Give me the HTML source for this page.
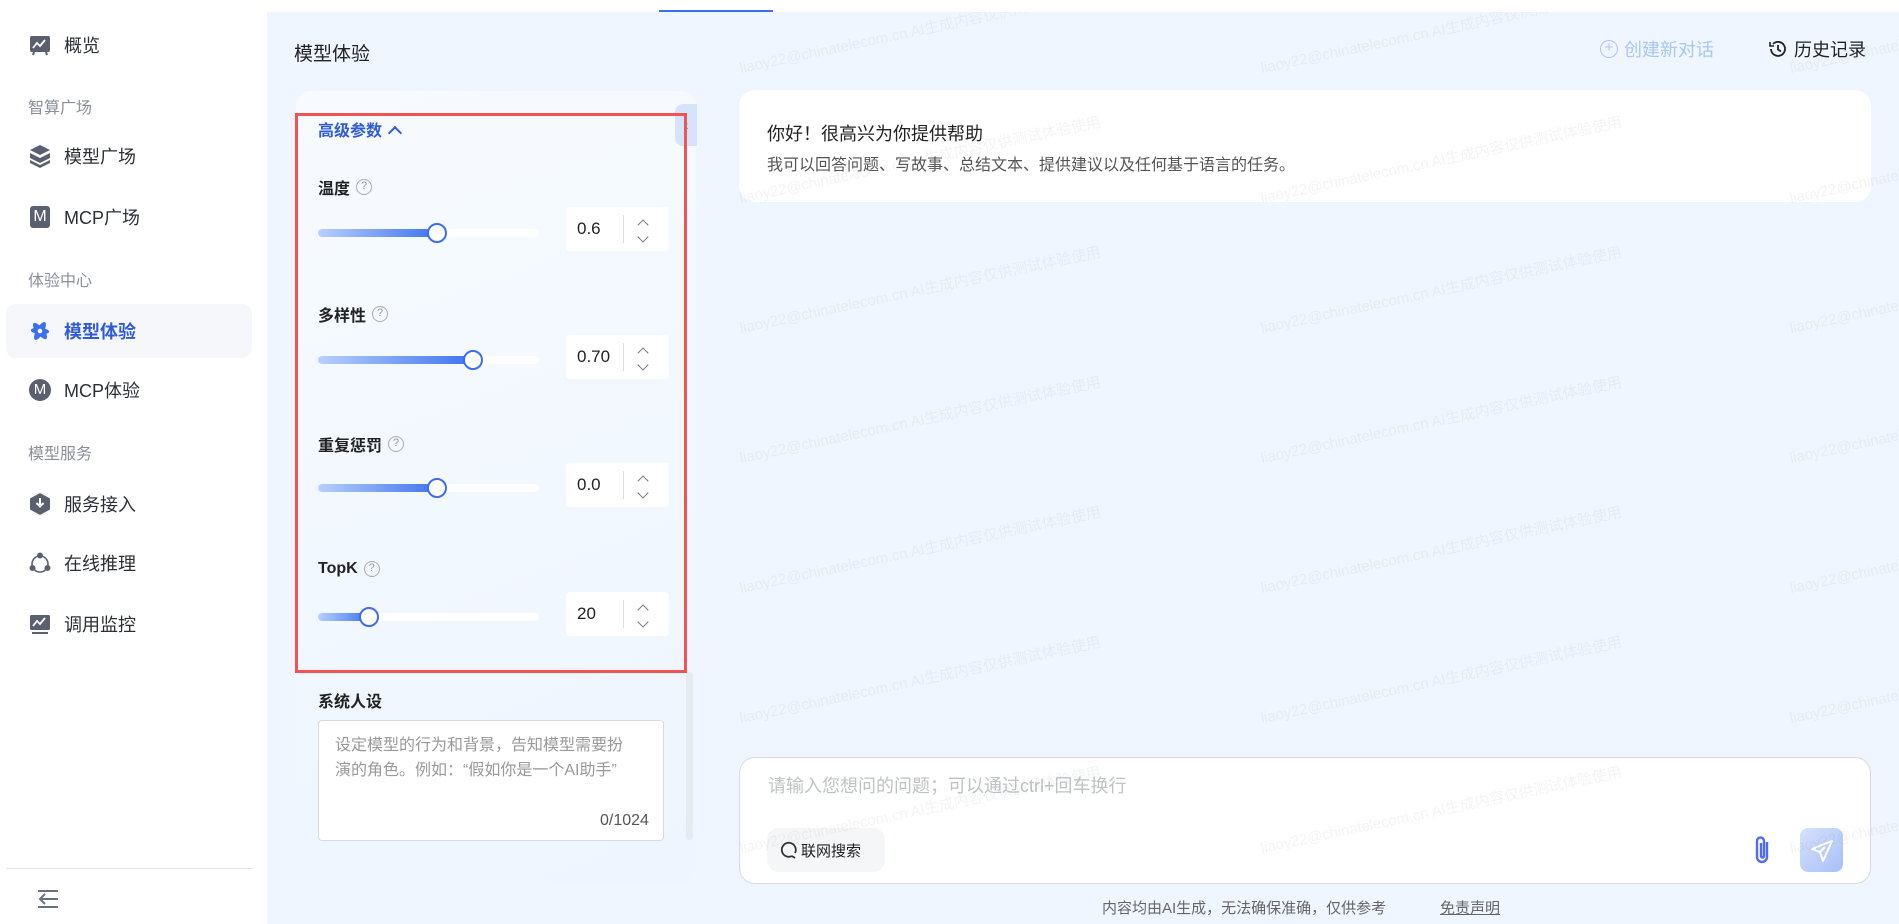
<!DOCTYPE html>
<html><head><meta charset="utf-8">
<style>
*{box-sizing:border-box;margin:0;padding:0}
body{width:1899px;height:924px;overflow:hidden;background:#eff6ff;font-family:"Liberation Sans","Noto Sans CJK SC",sans-serif;position:relative;color:#222}
.abs{position:absolute}
.side{left:0;top:0;width:267px;height:924px;background:#fff}
.item{position:absolute;left:0;width:267px;height:40px;display:flex;align-items:center;font-size:18px;color:#2b2f36}
.item .ic{width:22px;height:22px;margin-left:29px;margin-right:13px;display:flex;align-items:center;justify-content:center}
.sec{position:absolute;left:28px;font-size:16px;color:#8a8f99}
.topline{left:267px;top:0;width:1632px;height:12px;background:#fff}
.lbl{position:absolute;left:318px;font-size:16px;font-weight:bold;color:#222;display:flex;align-items:center}
.q{display:inline-block;width:16px;height:16px;border:1.5px solid #aaa;border-radius:50%;font-size:11px;color:#999;text-align:center;line-height:13px;margin-left:6px;font-weight:normal}
.track{position:absolute;left:318px;width:221px;height:8px;border-radius:4px;background:#fff}
.fill{position:absolute;left:0;top:0;height:8px;border-radius:4px;background:linear-gradient(90deg,#b8d0fb,#3f73ee)}
.thumb{position:absolute;top:-6px;width:20px;height:20px;border-radius:50%;background:#fff;border:2.5px solid #3d6df0;margin-left:-10px}
.num{position:absolute;left:566px;width:103px;height:44px;background:#fff;border-radius:4px;font-size:17px;color:#222}
.num span{position:absolute;left:11px;top:12px}
.num i{position:absolute;left:57px;top:8px;width:1px;height:28px;background:#ddd}
.num b{position:absolute;left:73px;width:8px;height:8px;border-left:1.5px solid #777;border-top:1.5px solid #777}
.wm{position:absolute;font-size:15px;color:rgba(60,60,80,0.06);white-space:nowrap;transform:rotate(-12deg);transform-origin:left bottom}
</style></head><body>
<div class="abs side"></div>
<div class="abs topline"></div>
<div class="abs" style="left:659px;top:10px;width:114px;height:2px;background:#3b6ff0"></div>

<!-- sidebar -->
<div class="item" style="top:25px"><div class="ic"><svg width="22" height="22" viewBox="0 0 22 22"><rect x="1" y="2" width="20" height="16" rx="2" fill="#5b6070"/><path d="M4 14l4-5 3 3 5-6" stroke="#fff" stroke-width="1.8" fill="none"/><path d="M5 18l-1 3M17 18l1 3" stroke="#5b6070" stroke-width="2"/></svg></div>概览</div>
<div class="sec" style="top:94px">智算广场</div>
<div class="item" style="top:136px"><div class="ic"><svg width="22" height="24" viewBox="0 0 22 24"><path d="M11 1l10 5-10 5L1 6z" fill="#5b6070"/><path d="M1 9l10 5 10-5v5l-10 5-10-5z" fill="#5b6070"/><path d="M1 16l10 5 10-5v3l-10 5-10-5z" fill="#5b6070"/></svg></div>模型广场</div>
<div class="item" style="top:197px"><div class="ic"><div style="width:20px;height:22px;background:#5b6070;border-radius:3px;color:#fff;font-size:16px;text-align:center;line-height:22px">M</div></div>MCP广场</div>
<div class="sec" style="top:267px">体验中心</div>
<div class="abs" style="left:6px;top:304px;width:246px;height:54px;background:#f5f7fa;border-radius:10px"></div>
<div class="item" style="top:311px;color:#2f5bd8;font-weight:bold"><div class="ic"><svg width="24" height="24" viewBox="0 0 24 24"><g fill="#3b6ff0"><ellipse cx="12" cy="12" rx="4" ry="11" transform="rotate(30 12 12)"/><ellipse cx="12" cy="12" rx="4" ry="11" transform="rotate(-40 12 12)"/><ellipse cx="12" cy="12" rx="3.5" ry="10" transform="rotate(95 12 12)"/></g><circle cx="12" cy="12" r="2.5" fill="#fff"/></svg></div>模型体验</div>
<div class="item" style="top:370px"><div class="ic"><div style="width:22px;height:22px;background:#5b6070;border-radius:50%;color:#fff;font-size:15px;text-align:center;line-height:22px">M</div></div>MCP体验</div>
<div class="sec" style="top:440px">模型服务</div>
<div class="item" style="top:484px"><div class="ic"><svg width="22" height="24" viewBox="0 0 22 24"><path d="M11 1l10 5.5v11L11 23 1 17.5v-11z" fill="#5b6070"/><path d="M11 6v8M7.5 11l3.5 3.5 3.5-3.5" stroke="#fff" stroke-width="2" fill="none"/></svg></div>服务接入</div>
<div class="item" style="top:543px"><div class="ic"><svg width="22" height="22" viewBox="0 0 22 22"><circle cx="11" cy="12" r="8" fill="none" stroke="#5b6070" stroke-width="1.6"/><circle cx="11" cy="3.5" r="3" fill="#5b6070"/><circle cx="3.5" cy="16" r="3" fill="#5b6070"/><circle cx="18.5" cy="16" r="3" fill="#5b6070"/></svg></div>在线推理</div>
<div class="item" style="top:604px"><div class="ic"><svg width="22" height="22" viewBox="0 0 22 22"><rect x="1" y="2" width="20" height="15" rx="1.5" fill="#5b6070"/><path d="M4 13l4-5 3 3 5-6" stroke="#fff" stroke-width="1.8" fill="none"/><rect x="3" y="19" width="16" height="2" fill="#5b6070"/></svg></div>调用监控</div>
<div class="abs" style="left:6px;top:868px;width:247px;height:1px;background:#e3e4e6"></div>
<svg class="abs" style="left:36px;top:889px" width="24" height="20" viewBox="0 0 24 20"><path d="M2 2h20M2 18h20M4 10h18M9 5l-5 5 5 5" stroke="#6b7080" stroke-width="2" fill="none"/></svg>

<!-- header -->
<div class="abs" style="left:294px;top:39px;font-size:19px;color:#222">模型体验</div>
<div class="abs" style="left:1600px;top:36px;font-size:18px;color:#a9c6f6;display:flex;align-items:center"><span style="display:inline-block;width:18px;height:18px;border:1.5px solid #a9c6f6;border-radius:50%;text-align:center;line-height:14px;font-size:15px;margin-right:6px">+</span>创建新对话</div>
<div class="abs" style="left:1768px;top:36px;font-size:18px;color:#222;display:flex;align-items:center"><svg width="20" height="20" viewBox="0 0 20 20" style="margin-right:6px"><path d="M3 10a7 7 0 1 0 2-5" stroke="#222" stroke-width="1.8" fill="none"/><path d="M2 3v4h4" stroke="#222" stroke-width="1.6" fill="none"/><path d="M10 6v4.5l3 2" stroke="#222" stroke-width="1.8" fill="none"/></svg>历史记录</div>

<!-- left panel -->
<div class="abs" style="left:295px;top:90px;width:402px;height:794px;border-radius:16px;background:linear-gradient(160deg,#f7fbff,#eef5ff);border:1px solid #f2f6fc"></div>
<div class="abs" style="left:675px;top:104px;width:22px;height:42px;background:#d6e4fb;border-radius:8px 0 0 8px;color:#333;font-size:14px;line-height:42px;text-align:center">‹</div>
<div class="abs" style="left:686px;top:672px;width:7px;height:168px;background:#e6ebf2;border-radius:3px"></div>
<div class="abs" style="left:295px;top:113px;width:392px;height:560px;border:3px solid #f25353"></div>
<div class="abs" style="left:318px;top:117px;font-size:16px;font-weight:bold;color:#2f5bd8">高级参数 <span style="display:inline-block;width:10px;height:10px;border-left:2px solid #2f5bd8;border-top:2px solid #2f5bd8;transform:rotate(45deg);margin-left:4px;position:relative;top:2px"></span></div>

<div class="lbl" style="top:175px">温度<span class="q">?</span></div>
<div class="track" style="top:229px"><div class="fill" style="width:119px"></div><div class="thumb" style="left:119px"></div></div>
<div class="num" style="top:207px"><span>0.6</span><i></i><b style="top:14px;transform:rotate(45deg)"></b><b style="top:26px;transform:rotate(225deg)"></b></div>

<div class="lbl" style="top:302px">多样性<span class="q">?</span></div>
<div class="track" style="top:356px"><div class="fill" style="width:155px"></div><div class="thumb" style="left:155px"></div></div>
<div class="num" style="top:335px"><span>0.70</span><i></i><b style="top:14px;transform:rotate(45deg)"></b><b style="top:26px;transform:rotate(225deg)"></b></div>

<div class="lbl" style="top:432px">重复惩罚<span class="q">?</span></div>
<div class="track" style="top:484px"><div class="fill" style="width:119px"></div><div class="thumb" style="left:119px"></div></div>
<div class="num" style="top:463px"><span>0.0</span><i></i><b style="top:14px;transform:rotate(45deg)"></b><b style="top:26px;transform:rotate(225deg)"></b></div>

<div class="lbl" style="top:560px">TopK<span class="q">?</span></div>
<div class="track" style="top:613px"><div class="fill" style="width:51px"></div><div class="thumb" style="left:51px"></div></div>
<div class="num" style="top:592px"><span>20</span><i></i><b style="top:14px;transform:rotate(45deg)"></b><b style="top:26px;transform:rotate(225deg)"></b></div>

<div class="abs" style="left:318px;top:688px;font-size:16px;font-weight:bold;color:#222">系统人设</div>
<div class="abs" style="left:318px;top:720px;width:346px;height:121px;background:#fff;border:1px solid #d8dade;border-radius:4px"></div>
<div class="abs" style="left:335px;top:733px;width:300px;font-size:16px;line-height:25px;color:#999">设定模型的行为和背景，告知模型需要扮演的角色。例如：“假如你是一个AI助手”</div>
<div class="abs" style="left:600px;top:812px;font-size:16px;color:#555">0/1024</div>

<!-- greeting -->
<div class="abs" style="left:739px;top:90px;width:1132px;height:112px;background:#fff;border-radius:16px"></div>
<div class="abs" style="left:767px;top:120px;font-size:18px;color:#222">你好！很高兴为你提供帮助</div>
<div class="abs" style="left:767px;top:151px;font-size:16px;color:#555">我可以回答问题、写故事、总结文本、提供建议以及任何基于语言的任务。</div>

<!-- input -->
<div class="abs" style="left:739px;top:757px;width:1132px;height:127px;background:#fff;border:1px solid #d9dbe0;border-radius:16px"></div>
<div class="abs" style="left:768px;top:772px;font-size:18px;color:#c0c2c6">请输入您想问的问题；可以通过ctrl+回车换行</div>
<div class="abs" style="left:767px;top:828px;width:118px;height:44px;background:#f5f6f8;border-radius:12px;font-size:15px;color:#222;display:flex;align-items:center;padding-left:13px"><svg width="18" height="18" viewBox="0 0 18 18" style="margin-right:3px"><path d="M15 12A7 7 0 1 0 12 15" stroke="#333" stroke-width="1.8" fill="none"/><path d="M12 15l3 2" stroke="#333" stroke-width="1.8"/></svg>联网搜索</div>
<svg class="abs" style="left:1753px;top:834px" width="20" height="32" viewBox="0 0 20 32"><path d="M14 8v15a5 5 0 0 1-10 0V7a3.5 3.5 0 0 1 7 0v15a1.5 1.5 0 0 1-3 0V9" stroke="#4f6cf0" stroke-width="2.4" fill="none"/></svg>
<div class="abs" style="left:1800px;top:828px;width:43px;height:44px;border-radius:8px;background:linear-gradient(135deg,#d6e2fc,#a8bff6)"></div>
<svg class="abs" style="left:1809px;top:838px" width="26" height="26" viewBox="0 0 26 26"><path d="M23 3L3 11l8 3 3 9z" stroke="#fff" stroke-width="2" fill="none" stroke-linejoin="round"/><path d="M11 14l5-5" stroke="#fff" stroke-width="2"/></svg>

<div class="abs" style="left:1102px;top:897px;font-size:15px;color:#666">内容均由AI生成，无法确保准确，仅供参考</div>
<div class="abs" style="left:1440px;top:897px;font-size:15px;color:#666;text-decoration:underline">免责声明</div>

<!-- watermarks -->
<div class="abs" style="left:739px;top:12px;width:1160px;height:912px;overflow:hidden;pointer-events:none">
<div class="wm" style="left:3px;top:45px">liaoy22@chinatelecom.cn AI生成内容仅供测试体验使用</div>
<div class="wm" style="left:524px;top:45px">liaoy22@chinatelecom.cn AI生成内容仅供测试体验使用</div>
<div class="wm" style="left:1053px;top:45px">liaoy22@chinatelecom.cn AI生成内容仅供测试体验使用</div>
<div class="wm" style="left:3px;top:175px">liaoy22@chinatelecom.cn AI生成内容仅供测试体验使用</div>
<div class="wm" style="left:524px;top:175px">liaoy22@chinatelecom.cn AI生成内容仅供测试体验使用</div>
<div class="wm" style="left:1053px;top:175px">liaoy22@chinatelecom.cn AI生成内容仅供测试体验使用</div>
<div class="wm" style="left:3px;top:305px">liaoy22@chinatelecom.cn AI生成内容仅供测试体验使用</div>
<div class="wm" style="left:524px;top:305px">liaoy22@chinatelecom.cn AI生成内容仅供测试体验使用</div>
<div class="wm" style="left:1053px;top:305px">liaoy22@chinatelecom.cn AI生成内容仅供测试体验使用</div>
<div class="wm" style="left:3px;top:435px">liaoy22@chinatelecom.cn AI生成内容仅供测试体验使用</div>
<div class="wm" style="left:524px;top:435px">liaoy22@chinatelecom.cn AI生成内容仅供测试体验使用</div>
<div class="wm" style="left:1053px;top:435px">liaoy22@chinatelecom.cn AI生成内容仅供测试体验使用</div>
<div class="wm" style="left:3px;top:565px">liaoy22@chinatelecom.cn AI生成内容仅供测试体验使用</div>
<div class="wm" style="left:524px;top:565px">liaoy22@chinatelecom.cn AI生成内容仅供测试体验使用</div>
<div class="wm" style="left:1053px;top:565px">liaoy22@chinatelecom.cn AI生成内容仅供测试体验使用</div>
<div class="wm" style="left:3px;top:695px">liaoy22@chinatelecom.cn AI生成内容仅供测试体验使用</div>
<div class="wm" style="left:524px;top:695px">liaoy22@chinatelecom.cn AI生成内容仅供测试体验使用</div>
<div class="wm" style="left:1053px;top:695px">liaoy22@chinatelecom.cn AI生成内容仅供测试体验使用</div>
<div class="wm" style="left:3px;top:825px">liaoy22@chinatelecom.cn AI生成内容仅供测试体验使用</div>
<div class="wm" style="left:524px;top:825px">liaoy22@chinatelecom.cn AI生成内容仅供测试体验使用</div>
<div class="wm" style="left:1053px;top:825px">liaoy22@chinatelecom.cn AI生成内容仅供测试体验使用</div>
</div>
</body></html>
